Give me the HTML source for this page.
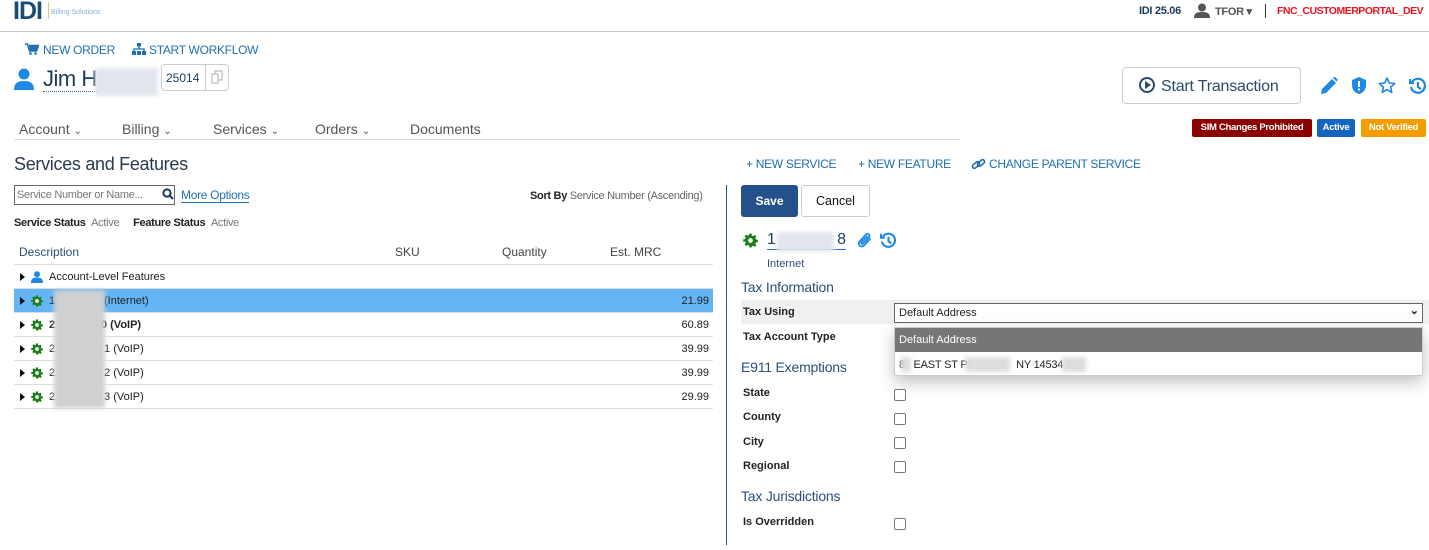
<!DOCTYPE html>
<html><head><meta charset="utf-8"><style>
*{margin:0;padding:0;box-sizing:border-box}
body{width:1429px;height:550px;position:relative;overflow:hidden;background:#fff;font-family:"Liberation Sans",sans-serif;color:#222;font-size:12px}
.a{position:absolute;white-space:nowrap}
.lnk{color:#1f6fb2;font-size:12px;letter-spacing:-0.3px}
.row{position:absolute;left:14px;width:699px;height:24px;border-bottom:1px solid #ddd;font-size:11px}
.row .t{position:absolute;left:6px;top:8px;width:0;height:0;border-left:5px solid #111;border-top:4px solid transparent;border-bottom:4px solid transparent}
.row svg{position:absolute;left:17px;top:6px}
.row .d{position:absolute;left:35px;top:6px}
.row .m{position:absolute;right:4px;top:6px}
.blur{position:absolute;background:#d4d7dc;filter:blur(2px)}
.lbl{position:absolute;left:743px;font-weight:bold;font-size:11px}
.cb{position:absolute;left:894px;width:12px;height:12px;border:1px solid #777;border-radius:2px;background:#fff}
.h{position:absolute;left:741px;font-size:14px;color:#2b4f7a;letter-spacing:-0.2px}
.badge{position:absolute;top:119px;height:18px;color:#fff;font-weight:bold;font-size:9.5px;padding:3px 0;text-align:center;border-radius:2px;white-space:nowrap;letter-spacing:-0.3px}
</style></head><body>
<svg width="0" height="0" style="position:absolute"><defs><g id="gear"><path d="M6 0.5h2l.3 1.8 1.3.6 1.5-1 1.4 1.4-1 1.5.6 1.3 1.8.3v2l-1.8.3-.6 1.3 1 1.5-1.4 1.4-1.5-1-1.3.6L8 13.5H6l-.3-1.8-1.3-.6-1.5 1-1.4-1.4 1-1.5-.6-1.3L.1 8V6l1.8-.3.6-1.3-1-1.5 1.4-1.4 1.5 1 1.3-.6z" fill="#1b7f1b"/><circle cx="7" cy="7" r="2.2" fill="#fff"/></g></defs></svg>
<!-- top bar -->
<div class="a" style="left:13px;top:-3px;font-size:25px;font-weight:bold;color:#1b4b7a;letter-spacing:-1px">IDI</div>
<div class="a" style="left:48px;top:2px;width:1px;height:17px;background:#d8c98a"></div>
<div class="a" style="left:51px;top:9px;font-size:7px;color:#8ab0d0">Billing Solutions</div>
<div class="a" style="left:1139px;top:5px;font-weight:bold;font-size:11px;color:#1b3b5a;letter-spacing:-0.3px">IDI 25.06</div>
<svg class="a" style="left:1194px;top:3px" width="16" height="15" viewBox="0 0 16 15"><circle cx="8" cy="4.5" r="4" fill="#555"/><path d="M0 15c0-5 3-6 8-6s8 1 8 6z" fill="#555"/></svg>
<div class="a" style="left:1215px;top:5px;font-size:11px;font-weight:bold;color:#555;letter-spacing:-0.3px">TFOR ▾</div>
<div class="a" style="left:1265px;top:4px;width:1px;height:14px;background:#333"></div>
<div class="a" style="left:1277px;top:5px;font-size:10.5px;font-weight:bold;color:#e8141b;letter-spacing:-0.5px">FNC_CUSTOMERPORTAL_DEV</div>
<div class="a" style="left:0;top:31px;width:1429px;height:1px;background:#c8c8c8"></div>

<svg class="a" style="left:25px;top:43px" width="14" height="12" viewBox="0 0 14 12"><path d="M0 1h2.5l2 7h7l2-5.5H4" fill="none" stroke="#1f6fb2" stroke-width="1.6"/><path d="M4 3h9l-1.7 4.5H5z" fill="#1f6fb2"/><circle cx="5.5" cy="10.5" r="1.3" fill="#1f6fb2"/><circle cx="10.5" cy="10.5" r="1.3" fill="#1f6fb2"/></svg>
<div class="a lnk" style="left:43px;top:43px">NEW ORDER</div>
<svg class="a" style="left:132px;top:43px" width="14" height="12" viewBox="0 0 14 12"><rect x="5" y="0" width="4" height="3.5" fill="#1f6fb2"/><path d="M7 3.5v2.5M2 8V6h10v2" stroke="#1f6fb2" stroke-width="1.3" fill="none"/><rect x="0" y="8" width="4" height="4" fill="#1f6fb2"/><rect x="5" y="8" width="4" height="4" fill="#1f6fb2"/><rect x="10" y="8" width="4" height="4" fill="#1f6fb2"/></svg>
<div class="a lnk" style="left:149px;top:43px">START WORKFLOW</div>
<svg class="a" style="left:14px;top:68px" width="20" height="22" viewBox="0 0 20 22"><circle cx="10" cy="6" r="5.5" fill="#1e88e5"/><path d="M0 22c0-7 4-9 10-9s10 2 10 9z" fill="#1e88e5"/></svg>
<div class="a" style="left:43px;top:66px;font-size:22px;color:#1b3b5a;border-bottom:1px dotted #1e6fc0;line-height:25px;letter-spacing:-0.5px">Jim H</div>
<div class="blur" style="left:95px;top:68px;width:63px;height:28px;background:#e2e6ec"></div>
<div class="a" style="left:161px;top:64px;width:68px;height:27px;border:1px solid #ccc;border-radius:4px"></div>
<div class="a" style="left:205px;top:64px;width:1px;height:27px;background:#ccc"></div>
<div class="a" style="left:166px;top:71px;font-size:12px;color:#1b3b5a">25014</div>
<svg class="a" style="left:211px;top:70px" width="12" height="14" viewBox="0 0 12 14" fill="none" stroke="#bbb" stroke-width="1.2"><rect x="1" y="4" width="6" height="9"/><path d="M4 4V1h7v9H7"/></svg>

<div class="a" style="left:1122px;top:67px;width:179px;height:37px;border:1px solid #ccc;border-radius:4px"></div>
<div class="a" style="left:1139px;top:77px;font-size:16px;color:#2b4a6a;letter-spacing:-0.2px"><span style="display:inline-block;width:16px;height:16px;border:2px solid #2b4a6a;border-radius:50%;vertical-align:-2px;position:relative;margin-right:6px"><span style="position:absolute;left:4px;top:2px;border-left:6px solid #2b4a6a;border-top:4px solid transparent;border-bottom:4px solid transparent"></span></span>Start Transaction</div>
<svg class="a" style="left:1321px;top:77px" width="17" height="17" viewBox="0 0 17 17"><path d="M0 17l1-5L11 2l4 4L5 16z" fill="#1e88e5"/><path d="M12 1l1.5-1.5 3.5 3.5L15.5 4.5z" fill="#1e88e5"/></svg>
<svg class="a" style="left:1352px;top:77px" width="14" height="17" viewBox="0 0 14 17"><path d="M7 0l7 3v5c0 5-3 8-7 9C3 16 0 13 0 8V3z" fill="#1e88e5"/><rect x="6" y="4" width="2" height="6" fill="#fff"/><rect x="6" y="11.5" width="2" height="2" fill="#fff"/></svg>
<svg class="a" style="left:1378px;top:77px" width="18" height="17" viewBox="0 0 18 17"><path d="M9 1l2.3 5 5.4.5-4.1 3.6 1.2 5.3L9 12.6l-4.8 2.8 1.2-5.3L1.3 6.5 6.7 6z" fill="none" stroke="#1e88e5" stroke-width="1.6" stroke-linejoin="round"/></svg>
<svg class="a" style="left:1409px;top:77px" width="18" height="18" viewBox="0 0 18 18" fill="none" stroke="#1e88e5" stroke-width="2.2"><path d="M3 5a7 7 0 1 1-1 5"/><path d="M1 2v4h4"/><path d="M9 5v5l3 2"/></svg>

<div class="a" style="left:19px;top:121px;font-size:14px;color:#555">Account <span style="font-size:10px">⌄</span></div>
<div class="a" style="left:122px;top:121px;font-size:14px;color:#555">Billing <span style="font-size:10px">⌄</span></div>
<div class="a" style="left:213px;top:121px;font-size:14px;color:#555">Services <span style="font-size:10px">⌄</span></div>
<div class="a" style="left:315px;top:121px;font-size:14px;color:#555">Orders <span style="font-size:10px">⌄</span></div>
<div class="a" style="left:410px;top:121px;font-size:14px;color:#555">Documents</div>
<div class="a" style="left:14px;top:139px;width:946px;height:1px;background:#ddd"></div>
<div class="badge" style="left:1192px;width:120px;background:#8b0000">SIM Changes Prohibited</div>
<div class="badge" style="left:1317px;width:38px;background:#1565c0">Active</div>
<div class="badge" style="left:1361px;width:65px;background:#f59c00">Not Verified</div>

<div class="a" style="left:14px;top:154px;font-size:18px;color:#2b3b4a;letter-spacing:-0.3px">Services and Features</div>
<div class="a lnk" style="left:746px;top:157px">+ NEW SERVICE</div>
<div class="a lnk" style="left:858px;top:157px">+ NEW FEATURE</div>
<svg class="a" style="left:971px;top:158px" width="15" height="13" viewBox="0 0 15 13" fill="none" stroke="#1f6fb2" stroke-width="1.6"><rect x="1" y="5" width="8" height="4" rx="2" transform="rotate(-40 5 7)"/><rect x="6" y="3" width="8" height="4" rx="2" transform="rotate(-40 10 5)"/></svg>
<div class="a lnk" style="left:989px;top:157px">CHANGE PARENT SERVICE</div>

<div class="a" style="left:14px;top:185px;width:161px;height:20px;border:1px solid #666"></div>
<div class="a" style="left:17px;top:189px;font-size:11px;color:#777;letter-spacing:-0.3px">Service Number or Name...</div>
<svg class="a" style="left:162px;top:188px" width="12" height="12" viewBox="0 0 12 12" fill="none" stroke="#1b3b5a" stroke-width="2"><circle cx="5" cy="5" r="3.6"/><path d="M7.5 7.5L11 11"/></svg>
<div class="a" style="left:181px;top:189px;font-size:12px;color:#1f6fb2;border-bottom:1px solid #1f6fb2;letter-spacing:-0.3px;line-height:13px">More Options</div>
<div class="a" style="left:530px;top:190px;font-size:11px;letter-spacing:-0.3px"><b>Sort By</b> <span style="color:#666">Service Number (Ascending)</span></div>
<div class="a" style="left:14px;top:217px;font-size:11px;letter-spacing:-0.3px"><b>Service Status</b> <span style="color:#777">&nbsp;Active</span> &nbsp;&nbsp;&nbsp;&nbsp;<b>Feature Status</b> <span style="color:#777">&nbsp;Active</span></div>

<div class="a" style="left:19px;top:245px;font-size:12px;color:#2b4f7a">Description</div>
<div class="a" style="left:395px;top:245px;font-size:12px;color:#444">SKU</div>
<div class="a" style="left:502px;top:245px;font-size:12px;color:#444">Quantity</div>
<div class="a" style="left:610px;top:245px;font-size:12px;color:#444">Est. MRC</div>
<div class="a" style="left:14px;top:264px;width:699px;height:1px;background:#ddd"></div>
<div class="row" style="top:265px"><span class="t"></span><svg width="12" height="12" viewBox="0 0 12 12"><circle cx="6" cy="3.2" r="3" fill="#1e88e5"/><path d="M0 12c0-4 2-5.5 6-5.5s6 1.5 6 5.5z" fill="#1e88e5"/></svg><span class="d">Account-Level Features</span></div>
<div class="row" style="top:289px;background:#64b5f6"><span class="t"></span><svg width="12" height="12" viewBox="0 0 14 14"><use href="#gear"/></svg><span class="d">1&nbsp;&nbsp;&nbsp;&nbsp;&nbsp;&nbsp;&nbsp;&nbsp;&nbsp;&nbsp;&nbsp;&nbsp;&nbsp;&nbsp;&nbsp;&nbsp;(Internet)</span><span class="m">21.99</span></div>
<div class="row" style="top:313px"><span class="t"></span><svg width="12" height="12" viewBox="0 0 14 14"><use href="#gear"/></svg><span class="d" style="font-weight:bold">2&nbsp;&nbsp;&nbsp;&nbsp;&nbsp;&nbsp;&nbsp;&nbsp;&nbsp;&nbsp;&nbsp;&nbsp;&nbsp;&nbsp;&nbsp;0 (VoIP)</span><span class="m">60.89</span></div>
<div class="row" style="top:337px"><span class="t"></span><svg width="12" height="12" viewBox="0 0 14 14"><use href="#gear"/></svg><span class="d">2&nbsp;&nbsp;&nbsp;&nbsp;&nbsp;&nbsp;&nbsp;&nbsp;&nbsp;&nbsp;&nbsp;&nbsp;&nbsp;&nbsp;&nbsp;&nbsp;1 (VoIP)</span><span class="m">39.99</span></div>
<div class="row" style="top:361px"><span class="t"></span><svg width="12" height="12" viewBox="0 0 14 14"><use href="#gear"/></svg><span class="d">2&nbsp;&nbsp;&nbsp;&nbsp;&nbsp;&nbsp;&nbsp;&nbsp;&nbsp;&nbsp;&nbsp;&nbsp;&nbsp;&nbsp;&nbsp;&nbsp;2 (VoIP)</span><span class="m">39.99</span></div>
<div class="row" style="top:385px"><span class="t"></span><svg width="12" height="12" viewBox="0 0 14 14"><use href="#gear"/></svg><span class="d">2&nbsp;&nbsp;&nbsp;&nbsp;&nbsp;&nbsp;&nbsp;&nbsp;&nbsp;&nbsp;&nbsp;&nbsp;&nbsp;&nbsp;&nbsp;&nbsp;3 (VoIP)</span><span class="m">29.99</span></div>
<div class="blur" style="left:54px;top:290px;width:51px;height:118px;background:#d0d0d2"></div>

<div class="a" style="left:726px;top:185px;width:1px;height:360px;background:#2b5a8a"></div>

<div class="a" style="left:741px;top:185px;width:57px;height:32px;background:#245189;border-radius:3px;color:#fff;font-weight:bold;font-size:12px;text-align:center;line-height:32px">Save</div>
<div class="a" style="left:801px;top:185px;width:69px;height:32px;border:1px solid #ccc;border-radius:3px;font-size:12.5px;text-align:center;line-height:31px;color:#111">Cancel</div>
<svg class="a" style="left:743px;top:233px" width="15" height="15" viewBox="0 0 14 14"><use href="#gear"/></svg>
<div class="a" style="left:767px;top:231px;font-size:16px;color:#1b3b5a;width:79px;border-bottom:1px solid #1e6fc0">1<span style="float:right">8</span></div>
<div class="blur" style="left:777px;top:232px;width:57px;height:20px;background:#e2e6ec"></div>
<svg class="a" style="left:857px;top:232px" width="16" height="17" viewBox="0 0 16 17" fill="none" stroke="#1e88e5" stroke-width="1.8" stroke-linecap="round"><path d="M13 7l-6 6.5a3 3 0 0 1-4.5-4L9 2.5a2 2 0 0 1 3 2.8L6 11.5a1 1 0 0 1-1.5-1.4L10 4.5"/></svg>
<svg class="a" style="left:880px;top:232px" width="17" height="17" viewBox="0 0 18 18" fill="none" stroke="#1e88e5" stroke-width="2.2"><path d="M3 5a7 7 0 1 1-1 5"/><path d="M1 2v4h4"/><path d="M9 5v5l3 2"/></svg>
<div class="a" style="left:767px;top:258px;font-size:11px;color:#2b4f7a">Internet</div>

<div class="h" style="top:279px">Tax Information</div>
<div class="a" style="left:741px;top:300px;width:688px;height:24px;background:#f0f0f0"></div>
<div class="lbl" style="top:306px">Tax Using</div>
<div class="a" style="left:894px;top:303px;width:529px;height:20px;border:1px solid #666;background:#fff;font-size:11px;padding:3px 4px">Default Address<span style="position:absolute;right:3px;top:0;font-weight:bold">⌄</span></div>
<div class="lbl" style="top:331px">Tax Account Type</div>
<div class="h" style="top:359px">E911 Exemptions</div>
<div class="a" style="left:894px;top:327px;width:529px;height:49px;background:#fff;box-shadow:0 6px 16px rgba(0,0,0,.25);border:1px solid #ccc;border-radius:0 0 3px 3px"></div>
<div class="a" style="left:895px;top:328px;width:527px;height:24px;background:#767676;color:#fff;font-size:11px;padding:6px 4px">Default Address</div>
<div class="a" style="left:899px;top:359px;font-size:11px;letter-spacing:-0.2px">8&nbsp;&nbsp;&nbsp;EAST ST PI&nbsp;&nbsp;&nbsp;&nbsp;&nbsp;&nbsp;&nbsp;&nbsp;&nbsp;&nbsp;&nbsp;&nbsp;&nbsp;&nbsp;&nbsp;&nbsp;NY 14534</div>
<div class="blur" style="left:901px;top:357px;width:10px;height:15px;background:#ddd"></div>
<div class="blur" style="left:965px;top:357px;width:45px;height:15px;background:#ddd"></div>
<div class="blur" style="left:1062px;top:357px;width:24px;height:15px;background:#ddd"></div>

<div class="lbl" style="top:387px">State</div><div class="cb" style="top:389px"></div>
<div class="lbl" style="top:411px">County</div><div class="cb" style="top:413px"></div>
<div class="lbl" style="top:436px">City</div><div class="cb" style="top:437px"></div>
<div class="lbl" style="top:460px">Regional</div><div class="cb" style="top:461px"></div>
<div class="h" style="top:488px">Tax Jurisdictions</div>
<div class="lbl" style="top:516px">Is Overridden</div><div class="cb" style="top:518px"></div>
</body></html>
